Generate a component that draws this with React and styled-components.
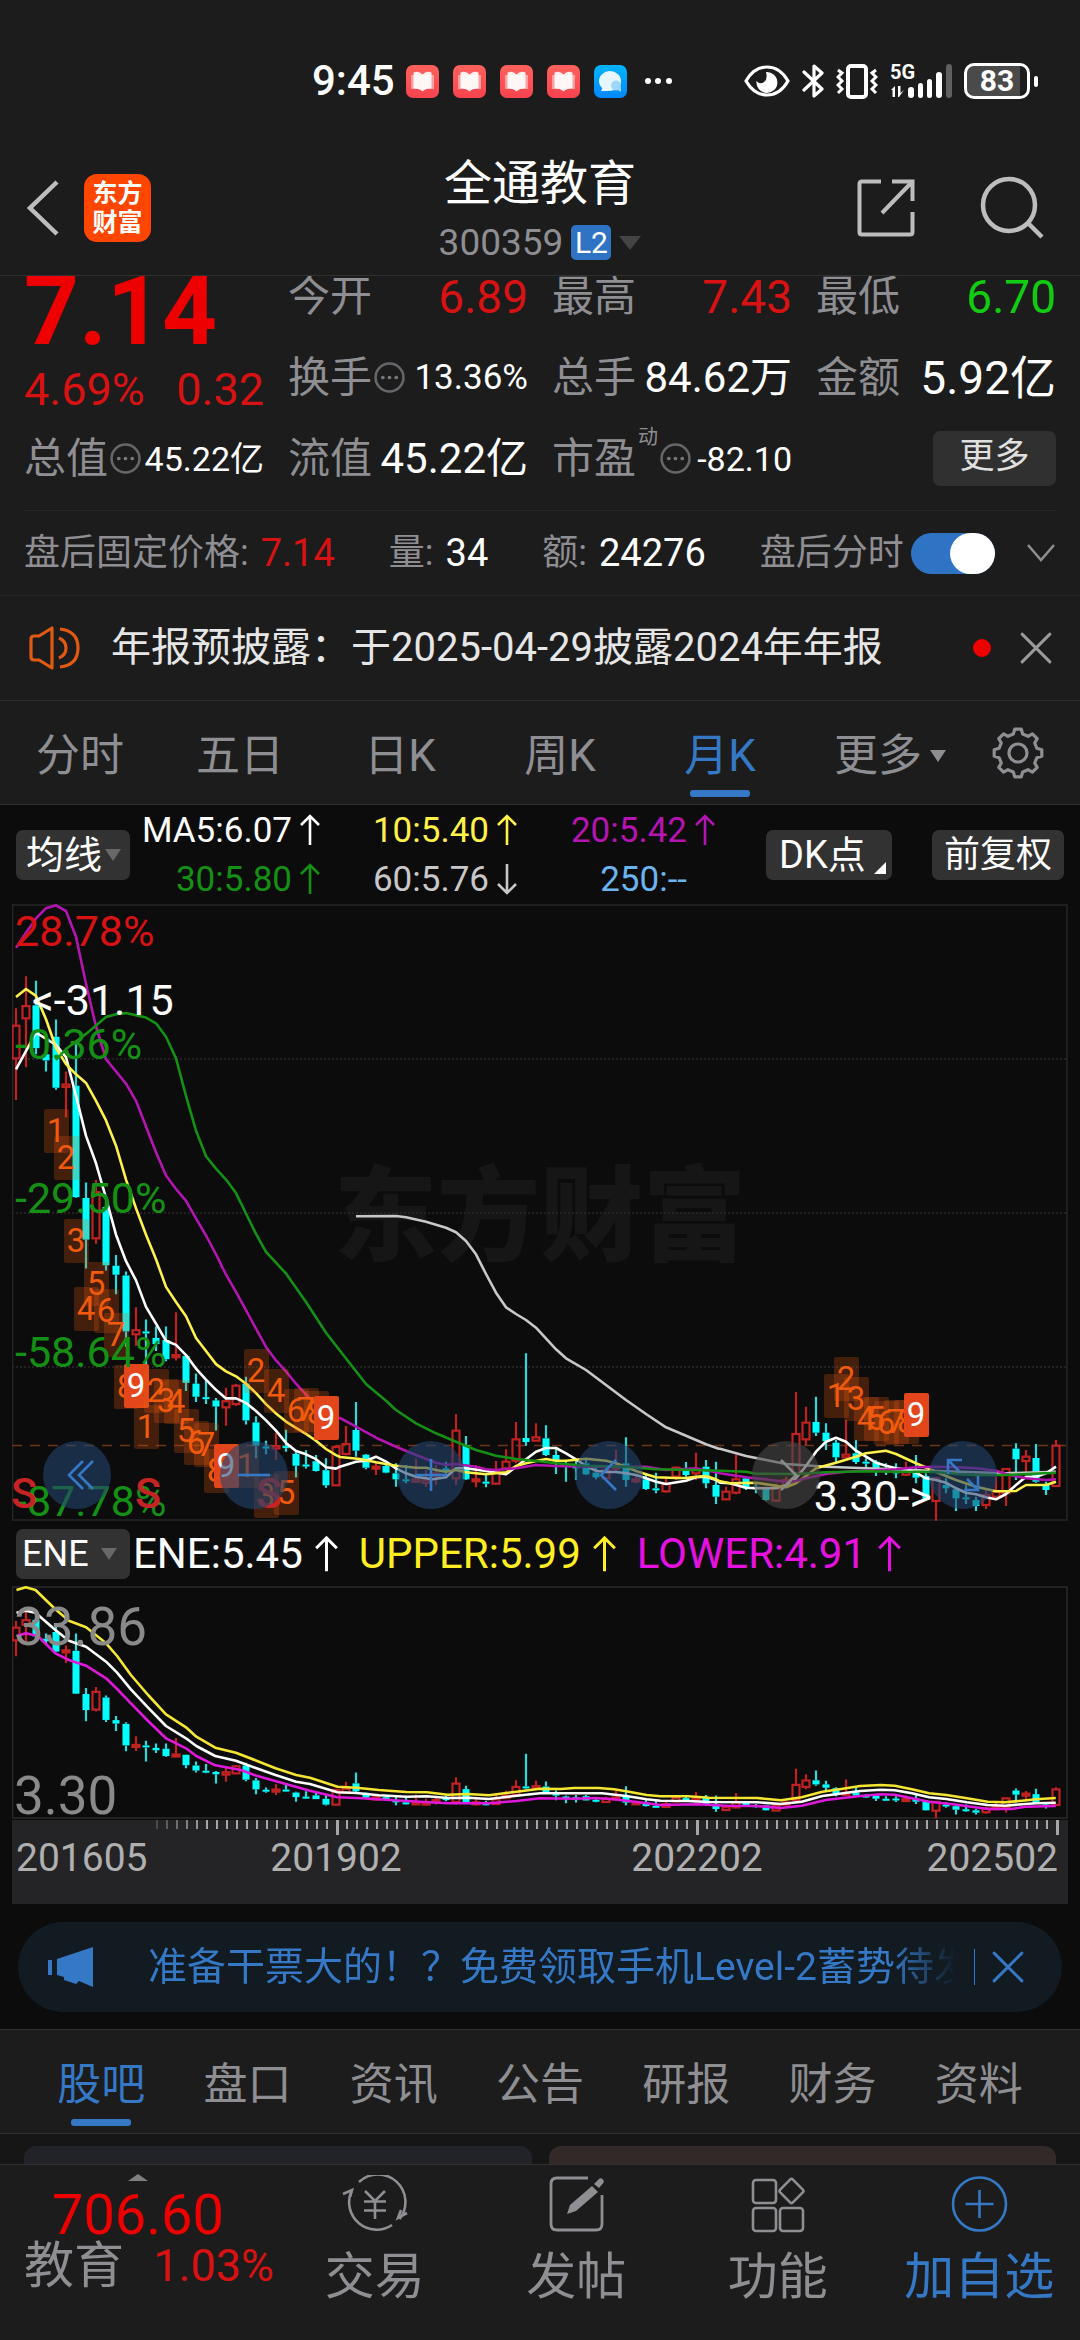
import React from "react";
import styled, { createGlobalStyle } from "styled-components";

const c = {
  page: "#1c1c1c",
  dark: "#0c0c0c",
  line: "#303030",
  faint: "#272727",
  grey: "#8e8e93",
  icon: "#bdbdbd",
  blue: "#3478c6",
  red: "#d81212",
  hotRed: "#ee0000",
  green: "#12cc12",
  maGreen: "#149014",
  yellow: "#fff04a",
  magenta: "#b414b0",
  button: "#323232",
  cyan: "#00ffff",
  candleRed: "#c02222",
  orange: "#f25a0c",
};

const font = '"Roboto", "Noto Sans CJK SC", sans-serif';

const GlobalStyle = createGlobalStyle`
  * { box-sizing: border-box; }
  body { margin: 0; background: ${c.page}; font-family: ${font}; color: #fff; }
  button { border: 0; padding: 0; margin: 0; background: none; color: inherit; font-family: inherit; cursor: pointer; }
  svg { display: block; flex: none; }
`;

/* ---------- status bar ---------- */

const StatusBar = styled.header`
  display: flex;
  align-items: center;
  justify-content: space-between;
  height: 140px;
  padding: 22px 42px 0 312px;
`;
const StatusGroup = styled.div`
  display: flex;
  align-items: center;
  gap: ${(p) => p.$gap}px;
`;
const Clock = styled.time`
  width: 80px;
  font-size: 42px;
  font-weight: 500;
  line-height: 48px;
`;
const AppBadge = styled.span`
  display: grid;
  place-items: center;
  width: 33px;
  height: 33px;
  border-radius: 7px;
  background: ${(p) => (p.$chat ? "linear-gradient(#00b4ff, #0088ff)" : "linear-gradient(#ff625c, #f8434f)")};
`;
const Battery = styled.span`
  display: grid;
  place-items: center;
  width: 66px;
  height: 36px;
  border: 3px solid #fff;
  border-radius: 10px;
  background: linear-gradient(90deg, #4a4a4a 88%, #1c1c1c 88%);
  font-size: 30px;
  font-weight: 700;
  line-height: 30px;
`;
const BatteryTip = styled.span`
  width: 4px;
  height: 11px;
  margin-left: 4px;
  border-radius: 2px;
  background: #fff;
`;
const BatteryWrap = styled.span`
  display: flex;
  align-items: center;
`;

const BookGlyph = () => (
  <svg width="25" height="23" viewBox="0 0 25 23">
    <path d="M1 5h23v14H1z" fill="#fff" opacity=".45" />
    <path d="M3.500 2.500Q9 .5 12.500 4.500Q16 .5 21.500 2.500V18.500Q16 18 12.500 21.500Q9 18 3.500 18.500Z" fill="#fff" opacity=".9" />
  </svg>
);
const ChatGlyph = () => (
  <svg width="25" height="23" viewBox="0 0 25 23">
    <ellipse cx="12" cy="11" rx="11" ry="10" fill="#e8f6ff" />
    <path d="M3 21h8l-5-6z" fill="#e8f6ff" />
    <circle cx="18" cy="15.500" r="5" fill="#9fd6ff" />
    <path d="M18 19l5 3v-5z" fill="#9fd6ff" />
  </svg>
);

/* ---------- title bar ---------- */

const TitleBar = styled.div`
  display: grid;
  grid-template-columns: 1fr auto 1fr;
  align-items: center;
  height: 136px;
  padding: 0 26px;
  border-bottom: 1px solid ${c.line};
`;
const Side = styled.div`
  display: flex;
  align-items: center;
  gap: ${(p) => p.$gap}px;
  padding-right: ${(p) => (p.$end ? 10 : 0)}px;
  justify-content: ${(p) => (p.$end ? "flex-end" : "flex-start")};
`;
const IconButton = styled.button`
  display: grid;
  place-items: center;
`;
const Logo = styled.span`
  display: grid;
  place-items: center;
  align-content: center;
  width: 67px;
  height: 68px;
  border-radius: 13px;
  background: #ff4600;
  font-size: 25px;
  font-weight: 700;
  line-height: 29px;
  text-align: center;
`;
const TitleBlock = styled.div`
  padding-top: 10px;
  text-align: center;
`;
const Title = styled.h1`
  margin: 0;
  font-size: 48px;
  font-weight: 400;
  line-height: 60px;
`;
const CodeRow = styled.div`
  display: flex;
  align-items: center;
  justify-content: center;
  gap: 8px;
  color: ${c.grey};
  font-size: 37px;
  line-height: 58px;
`;
const Level = styled.span`
  width: 40px;
  border-radius: 5px;
  background: #2f74c4;
  color: #fff;
  font-size: 30px;
  line-height: 35px;
  text-align: center;
`;
const Caret = styled.span`
  border: ${(p) => p.$w}px solid transparent;
  border-bottom-width: 0;
  border-top: ${(p) => p.$h}px solid ${(p) => p.$color};
`;

/* ---------- quote ---------- */

const QuoteClip = styled.section`
  overflow: hidden;
  padding: 0 24px;
`;
const QuoteGrid = styled.div`
  display: grid;
  grid-template-columns: repeat(4, 1fr);
  grid-auto-rows: 81px;
  column-gap: 24px;
  margin-top: -20px;
  padding-bottom: 11px;
  border-bottom: 1px solid ${c.faint};
`;
const PriceCell = styled.div`
  grid-row: span 2;
  color: ${c.hotRed};
`;
const Price = styled.div`
  font-size: 96px;
  font-weight: 700;
  line-height: 110px;
`;
const Change = styled.div`
  display: flex;
  justify-content: space-between;
  color: ${c.red};
  font-size: 45px;
  line-height: 48px;
`;
const Cell = styled.div`
  display: flex;
  align-items: center;
  justify-content: space-between;
  white-space: nowrap;
`;
const CellLabel = styled.span`
  display: flex;
  align-items: center;
  gap: 2px;
  color: ${c.grey};
  font-size: 42px;
  line-height: 48px;
`;
const Sup = styled.sup`
  align-self: flex-start;
  font-size: 20px;
  line-height: 20px;
  margin-top: -8px;
`;
const CellValue = styled.span`
  color: ${(p) => p.$color || "#fff"};
  font-size: ${(p) => p.$size || 42}px;
  line-height: 56px;
`;
const MoreButton = styled.button`
  width: 123px;
  height: 55px;
  margin-left: auto;
  padding-bottom: 4px;
  border-radius: 7px;
  background: #303030;
  color: #e0e0e0;
  font-size: 35px;
  line-height: 50px;
`;
const Dots = () => (
  <svg width="31" height="31" viewBox="0 0 30 30" fill="#77777b">
    <circle cx="15" cy="15" r="13.500" fill="none" stroke="#66666a" strokeWidth="2.500" />
    <circle cx="8.500" cy="15" r="1.800" /><circle cx="15" cy="15" r="1.800" /><circle cx="21.500" cy="15" r="1.800" />
  </svg>
);

const AfterRow = styled.section`
  display: flex;
  align-items: center;
  gap: 54px;
  height: 85px;
  padding: 0 27px 0 24px;
  border-bottom: 1px solid ${c.faint};
  font-size: 36px;
  line-height: 48px;
  white-space: nowrap;
`;
const Pair = styled.span`
  display: flex;
  align-items: center;
  gap: 12px;
  color: ${c.grey};
`;
const PairValue = styled.span`
  color: ${(p) => p.$color || "#fff"};
  font-size: 38px;
`;
const SwitchGroup = styled.div`
  display: flex;
  align-items: center;
  gap: 31px;
  margin-left: auto;
`;
const SwitchLabel = styled.label`
  display: flex;
  align-items: center;
  gap: 7px;
  color: ${c.grey};
`;
const Switch = styled.input`
  appearance: none;
  display: flex;
  justify-content: flex-end;
  width: 84px;
  height: 41px;
  margin: 0;
  border-radius: 21px;
  background: #2f74c4;
  &::after {
    content: "";
    width: 45px;
    height: 41px;
    border-radius: 21px;
    background: #fff;
  }
`;

const Notice = styled.section`
  display: flex;
  align-items: center;
  height: 105px;
  padding: 0 28px;
  border-bottom: 1px solid ${c.line};
`;
const NoticeText = styled.span`
  flex: 1;
  margin-left: 30px;
  color: #e6e6e6;
  font-size: 40px;
  line-height: 56px;
  white-space: nowrap;
`;
const RedDot = styled.span`
  width: 18px;
  height: 18px;
  margin-right: 29px;
  border-radius: 50%;
  background: ${c.hotRed};
`;

/* ---------- tabs ---------- */

const PeriodTabs = styled.nav`
  display: grid;
  grid-template-columns: repeat(5, 8fr) 9fr 5fr;
  height: 104px;
  border-bottom: 1px solid ${c.line};
`;
const SettingsButton = styled(IconButton)`
  justify-content: start;
  padding-left: 12px;
`;
const InfoTabs = styled.nav`
  display: grid;
  grid-template-columns: repeat(7, 1fr);
  height: 105px;
  padding: 0 28px;
  border: solid ${c.line};
  border-width: 1px 0;
`;
const Tab = styled.button`
  display: flex;
  flex-direction: column;
  align-items: center;
  justify-content: flex-end;
  gap: 4px;
  padding-bottom: 7px;
  color: ${(p) => (p.$on ? c.blue : c.grey)};
  font-size: 44px;
  line-height: 60px;
  &::after {
    content: "";
    width: 60px;
    height: 7px;
    border-radius: 3px;
    background: ${(p) => (p.$on ? c.blue : "transparent")};
  }
`;
const TabText = styled.span`
  display: flex;
  align-items: center;
  gap: 8px;
`;

/* ---------- charts ---------- */

const ChartArea = styled.section`
  background: ${c.dark};
`;
const MaBar = styled.div`
  display: flex;
  align-items: center;
  height: 99px;
  padding: 0 16px;
`;
const Chip = styled.button`
  position: relative;
  display: flex;
  align-items: center;
  justify-content: ${(p) => (p.$start ? "flex-start" : "center")};
  gap: ${(p) => p.$gap || 3}px;
  width: ${(p) => p.$w}px;
  height: 50px;
  padding: 0 0 0 ${(p) => p.$start || 0}px;
  border-radius: 7px;
  background: ${c.button};
  font-size: ${(p) => p.$size || 36}px;
  line-height: 48px;
  white-space: nowrap;
`;
const Corner = styled.span`
  position: absolute;
  right: 6px;
  bottom: 6px;
  border: 6px solid #fff;
  border-top-color: transparent;
  border-left-color: transparent;
`;
const MaGrid = styled.div`
  display: grid;
  grid-template-columns: 190px 197px 198px;
  grid-auto-rows: 49px;
  margin-right: auto;
`;
const MaItem = styled.span`
  display: flex;
  align-items: center;
  justify-content: flex-end;
  gap: 8px;
  color: ${(p) => p.$color};
  font-size: 35px;
  white-space: nowrap;
`;
const ArrowSlot = styled.span`
  width: 20px;
`;
const ChipPair = styled.div`
  display: flex;
  gap: 40px;
`;
const Frame = styled.div`
  position: relative;
  margin: 0 12px;
`;
const Plot = styled.svg`
  width: 100%;
  height: auto;
  font-family: ${font};
`;
const ToolRow = styled.div`
  position: absolute;
  left: 31px;
  right: 71px;
  bottom: 12px;
  display: flex;
  justify-content: space-between;
`;
const RoundTool = styled.button`
  display: grid;
  place-items: center;
  width: 68px;
  height: 68px;
  border-radius: 50%;
  background: ${(p) => (p.$dim ? "rgba(72, 72, 72, 0.6)" : "rgba(36, 68, 112, 0.6)")};
`;
const EneBar = styled.div`
  display: flex;
  align-items: center;
  height: 65px;
  padding: 0 16px;
`;
const EneItem = styled.span`
  display: flex;
  align-items: center;
  gap: 12px;
  margin-left: ${(p) => (p.$first ? 3 : 21)}px;
  color: ${(p) => p.$color};
  font-size: 42px;
  white-space: nowrap;
`;

const TICK = 10;
const candleX = (i) => 16 + i * TICK;

// Every row is [high, low, bodyTop, bodyBottom, rising]; rows are stored in
// blocks, each with its own vertical origin and resolution.
const block = (origin, unit, rows) =>
  rows.map(([h, l, t, b, up]) => [h, l, t, b].map((v) => origin + v / unit).concat(up));

const candles = [
  ...block(900, 2.45, [
    [265, 490, 308, 388, 1], [187, 410, 260, 290, 1], [198, 378, 258, 363, 0], [345, 420, 378, 393, 0],
    [293, 465, 335, 460, 0], [420, 533, 452, 458, 1], [345, 730, 455, 728, 0], [692, 903, 730, 832, 0],
    [686, 842, 716, 829, 1], [740, 908, 752, 895, 0], [870, 966, 896, 918, 0], [910, 1095, 920, 1057, 0],
    [998, 1092, 1054, 1064, 1], [1028, 1160, 1057, 1062, 0], [1045, 1105, 1073, 1088, 0], [1045, 1130, 1078, 1125, 0],
    [1010, 1128, 1115, 1120, 1], [1115, 1203, 1117, 1183, 0], [1160, 1230, 1185, 1217, 0], [1175, 1235, 1218, 1223, 0],
    [1220, 1300, 1226, 1241, 0], [1195, 1288, 1228, 1243, 1], [1185, 1240, 1190, 1235, 1], [1168, 1285, 1185, 1275, 0],
    [1265, 1368, 1280, 1337, 0], [1325, 1358, 1339, 1344, 0], [1305, 1372, 1338, 1344, 1], [1298, 1352, 1338, 1343, 0],
    [1352, 1415, 1357, 1386, 0], [1348, 1393, 1383, 1388, 0], [1360, 1400, 1375, 1399, 0], [1368, 1440, 1397, 1434, 0],
    [1335, 1435, 1340, 1434, 1],
  ]),
  ...block(1140, 3, [
    [858, 946, 912, 942, 1], [786, 950, 870, 932, 0], [942, 988, 944, 983, 0], [965, 1005, 980, 985, 1],
    [975, 1000, 978, 998, 0], [970, 1040, 1000, 1018, 0], [975, 1030, 1018, 1022, 0], [956, 1028, 1018, 1025, 1],
    [990, 1040, 1020, 1028, 1], [975, 1035, 1000, 1008, 1], [965, 1010, 985, 995, 0], [822, 1035, 872, 1015, 1],
    [888, 1020, 915, 1018, 0], [975, 1042, 1018, 1023, 1], [1005, 1042, 1025, 1030, 0], [963, 1033, 995, 1031, 1],
    [928, 990, 965, 985, 1], [846, 970, 898, 962, 1], [640, 917, 894, 906, 0], [850, 903, 892, 902, 1],
    [856, 948, 895, 945, 0], [925, 1002, 945, 965, 0], [965, 1025, 972, 975, 0], [960, 1020, 978, 985, 0],
    [960, 1005, 970, 1003, 0], [980, 1018, 998, 1012, 0], [975, 1018, 990, 1015, 1], [930, 1000, 980, 985, 1],
    [892, 1040, 970, 1020, 0], [1005, 1030, 1018, 1024, 1], [1000, 1050, 1018, 1047, 0], [998, 1060, 1045, 1050, 0],
    [1010, 1058, 1032, 1054, 1], [980, 1020, 983, 1010, 1], [966, 1010, 985, 1005, 0], [938, 1020, 990, 1000, 1],
    [960, 1045, 980, 1030, 0], [965, 1092, 1035, 1070, 0],
  ]),
  ...block(1300, 3, [
    [560, 600, 575, 598, 1], [465, 583, 538, 578, 1], [528, 570, 535, 565, 0], [550, 580, 560, 564, 0],
    [560, 602, 562, 600, 0], [550, 606, 562, 602, 1], [530, 560, 540, 556, 1], [276, 535, 402, 520, 1],
    [320, 435, 368, 418, 1], [290, 408, 366, 398, 0], [370, 450, 398, 424, 0], [420, 490, 428, 472, 0],
    [360, 475, 464, 472, 1], [420, 492, 460, 486, 0], [475, 505, 485, 489, 0], [480, 528, 485, 510, 0],
    [490, 525, 510, 514, 0], [490, 535, 508, 520, 0], [485, 528, 512, 524, 1], [465, 550, 510, 533, 0],
    [520, 602, 528, 600, 0], [530, 662, 535, 603, 1], [535, 580, 555, 565, 0], [560, 633, 568, 595, 0],
    [555, 612, 592, 597, 0], [590, 633, 600, 618, 0], [570, 627, 585, 615, 1], [530, 600, 575, 590, 1],
    [505, 618, 507, 580, 1], [430, 540, 446, 478, 0], [450, 515, 470, 483, 1], [432, 548, 474, 545, 0],
    [545, 585, 555, 570, 0], [420, 560, 437, 558, 1],
  ]),
];

// Line points in flat x, y order, stored in blocks like the candles.
const trace = (...blocks) =>
  blocks
    .flatMap(([ox, ux, oy, uy, flat]) => {
      const out = [];
      for (let i = 0; i < flat.length; i += 2) {
        out.push(`${(ox + flat[i] / ux).toFixed(1)},${(oy + flat[i + 1] / uy).toFixed(1)}`);
      }
      return out;
    })
    .join(" ");
const early = (...flat) => [0, 3, 900, 2.45, flat];
const mid = (...flat) => [340, 3, 1140, 3, flat];
const late = (...flat) => [720, 3, 1300, 3, flat];
const eneLeft = (...flat) => [0, 2.904, 1520, 3, flat];
const eneRight = (...flat) => [540, 2.904, 1520, 3, flat];

const maLines = [
  { color: "#c8c8c8", points: trace(
    mid(48,229,168,228,198,232,258,245,318,263,348,277,378,303,408,343,438,402,468,458,498,502,528,522,558,540,588,563,648,628,678,655,738,690,798,735,858,780,918,822,978,862,1038,887,1098,913,1136,926),
    late(0,446,78,468,138,480,198,492,318,500,438,505,528,508,648,513,768,517,858,520,1008,515)) },
  { color: "#fff", points: trace(
    early(48,415,108,325,168,355,198,385,228,480,258,578,288,645,318,730,348,820,378,885,408,932,438,997,468,1038,498,1080,528,1090,558,1115,588,1148,618,1175,648,1200,678,1221,708,1221,738,1232,768,1252,798,1275,828,1300,858,1330,888,1350,918,1358,948,1370,978,1390,1008,1393),
    mid(0,980,48,965,78,962,108,950,138,965,168,985,198,1000,228,1010,278,1018,318,1012,348,985,378,985,438,993,498,1003,528,980,588,935,618,924,648,924,678,940,708,958,738,978,768,992,798,996,828,996,858,1000,888,1005,918,1015,948,1025,978,1032,1038,1022,1068,1012,1098,1010,1128,1020),
    late(0,548,30,550,78,563,108,565,168,565,198,555,228,535,258,498,288,455,318,425,348,413,378,425,408,452,438,470,468,488,498,497,528,505,558,508,588,518,618,535,648,540,678,548,708,565,738,578,768,583,798,592,828,598,858,582,888,555,918,530,948,530,978,520,1008,500)) },
  { color: c.yellow, points: trace(
    early(48,238,78,218,108,235,138,292,168,362,198,402,228,427,258,448,288,492,318,540,348,602,378,685,408,755,438,820,468,880,498,948,528,985,558,1020,588,1073,618,1105,648,1137,678,1155,708,1167,738,1185,768,1208,798,1235,828,1258,858,1278,888,1293,918,1308,948,1325,978,1345,1008,1360),
    mid(0,951,60,957,108,967,168,977,228,983,258,983,288,990,318,995,348,990,378,997,438,1003,498,997,528,978,558,970,588,963,618,957,648,962,678,962,738,956,798,962,828,970,858,980,888,993,918,1003,948,1012,1008,1014,1038,1014,1068,1010,1098,1008,1128,1018),
    late(0,544,30,550,108,548,198,562,228,550,258,528,288,505,348,488,408,470,438,460,498,452,528,462,588,490,648,515,678,528,708,540,768,560,828,574,888,573,918,555,978,555,1008,545)) },
  { color: c.magenta, points: trace(
    early(48,117,78,80,108,45,138,20,168,13,198,27,228,90,258,205,288,310,318,390,348,420,378,450,408,492,438,555,468,618,498,675,528,708,558,737,588,780,618,822,648,868,678,918,708,960,738,1005,768,1050,798,1095,828,1128,858,1155,888,1185,918,1212,948,1235,1008,1268),
    mid(0,834,48,860,108,893,168,920,228,945,288,968,318,974,348,972,408,980,438,988,468,990,528,985,588,975,648,978,738,980,858,980,918,980,978,990,1068,985,1128,997),
    late(0,520,78,532,198,545,228,543,258,535,318,522,378,515,438,512,528,508,588,502,648,500,708,502,768,505,828,512,858,522,918,535,978,540,1008,538)) },
  { color: c.maGreen, points: trace(
    early(168,392,198,365,258,328,318,287,348,280,378,277,438,288,468,302,498,335,528,388,558,480,588,565,618,628,648,658,678,685,708,718,738,768,768,818,798,862,858,915,918,985,978,1060),
    mid(0,632,78,732,138,782,168,810,228,850,288,880,348,905,408,930,468,947,528,957,588,963,648,970,738,977,858,980,948,988,1068,990),
    late(0,512,78,515,108,521,228,522,318,517,438,514,528,515,648,516,708,522,768,525,858,525,1008,518)) },
];

const eneLines = [
  { color: "#f5e632", points: trace(
    eneLeft(48,210,75,202,103,210,161,268,200,302,250,322,308,370,340,408,380,465,430,525,482,583,540,622,570,650,625,683,685,698,745,722,800,745,860,765,900,773,980,800,1035,803,1100,810,1180,816,1240,817,1300,824,1360,822,1420,826,1500,815),
    eneRight(0,806,60,807,100,804,170,804,215,808,250,814,310,825,350,829,430,829,490,833,630,834,700,841,760,832,820,815,870,808,930,798,990,795,1030,797,1080,808,1130,820,1180,825,1240,835,1300,845,1350,847,1400,842,1440,838,1498,834)) },
  { color: "#fff", points: trace(
    eneLeft(48,278,75,272,103,278,161,330,200,362,250,380,308,425,340,458,380,508,430,563,482,618,540,655,570,678,625,708,685,722,745,745,800,765,860,785,900,792,980,817,1035,819,1100,826,1180,830,1240,829,1300,834,1360,833,1420,837,1500,827),
    eneRight(0,820,110,820,180,820,250,828,310,838,350,842,430,843,490,846,630,847,700,852,760,845,820,828,870,821,930,813,990,809,1030,811,1080,820,1130,832,1180,837,1240,847,1300,855,1350,857,1400,853,1440,850,1498,848)) },
  { color: "#e018dc", points: trace(
    eneLeft(48,348,75,340,110,348,161,400,200,420,250,437,308,475,340,507,380,550,430,603,482,655,540,685,570,708,625,736,700,750,745,767,830,792,900,812,980,832,1050,835,1180,843,1300,850,1420,850,1500,843),
    eneRight(0,835,100,836,160,834,215,838,310,850,350,855,460,853,540,857,630,858,700,864,760,857,830,840,930,828,990,823,1030,824,1080,835,1130,845,1200,853,1300,867,1370,867,1410,860,1498,858)) },
];

// Counts of the nine-turn signal: [first candle index, y of each count].
const turnRuns = [
  [4, [1131, 1158, 1241, 1309, 1284, 1311, 1335, 1387, 1386]],
  [13, [1427, 1391, 1401, 1402, 1431, 1443, 1445, 1471, 1466]],
  [23, [1466, 1371, 1496, 1391, 1493, 1411, 1410, 1413, 1418]],
  [82, [1396, 1379, 1399, 1419, 1419, 1423, 1422, 1422, 1415]],
];

const Candles = ({ map = (y) => y }) =>
  candles.map(([h, l, t, b, up], i) => {
    const x = candleX(i);
    const [high, low, top, bottom] = [h, l, t, b].map(map);
    const height = Math.max(bottom - top, 2);
    const color = up ? c.candleRed : c.cyan;
    return (
      <g key={i} stroke={color} strokeWidth="2.200" fill={up ? "none" : color}>
        <path d={`M${x} ${high}V${top}M${x} ${top + height}V${low}`} stroke={up ? color : "#2fd8d8"} />
        {up ? (
          <rect x={x - 3.5} y={top} width="7" height={height} />
        ) : (
          <rect x={x - 3.5} y={top} width="7" height={height} stroke="none" />
        )}
      </g>
    );
  });

const Lines = ({ data }) =>
  data.map((l) => (
    <polyline key={l.color} points={l.points} fill="none" stroke={l.color} strokeWidth="2.600" strokeLinejoin="round" />
  ));

const TurnCount = ({ x, y, n }) => {
  const final = n === 9;
  return (
    <g>
      <rect x={x - 12} y={y - 22} width="25" height="44" rx="2" fill={final ? "#e2461a" : c.orange} opacity={final ? 1 : 0.24} />
      <text x={x} y={y + 11} fontSize="33" textAnchor="middle" fill={final ? "#fff" : c.orange}>{n}</text>
    </g>
  );
};

const percentLabels = [
  ["28.78%", 946, c.red],
  ["-0.36%", 1059, c.maGreen],
  ["-29.50%", 1213, c.maGreen],
  ["-58.64%", 1367, c.maGreen],
  ["-87.78%", 1516, c.maGreen],
];

const PriceChart = () => (
  <Plot viewBox="12 904 1056 617" role="img" aria-label="月K">
    <text x="540" y="1253" fontSize="103" fontWeight="900" textAnchor="middle" fill="#161616">东方财富</text>
    <g stroke="#2a2a2a" strokeWidth="1.500" strokeDasharray="2 2">
      <path d="M12 1059H1067M12 1213H1067M12 1367H1067" />
    </g>
    <rect x="12.500" y="905" width="1054.500" height="615" fill="none" stroke="#262626" strokeWidth="1.500" />
    <path d="M12 1445.500H1067" stroke="#6e3418" strokeWidth="1.500" strokeDasharray="10 8" />
    <Candles />
    <Lines data={maLines} />
    {turnRuns.map(([start, ys]) =>
      ys.map((y, k) => <TurnCount key={`${start}-${k}`} x={candleX(start + k)} y={y} n={k + 1} />)
    )}
    <g fontSize="43">
      {percentLabels.map(([t, y, fill]) => (
        <text key={t} x="15" y={y} fill={fill}>{t}</text>
      ))}
      <g fill="#c62424" fontWeight="500" textAnchor="middle">
        <text x="24" y="1508">S</text>
        <text x="148" y="1508">S</text>
        <text x="269" y="1508">S</text>
      </g>
      <text x="32" y="1015" fill="#fff">&lt;-31.15</text>
      <text x="932" y="1511" fill="#fff" textAnchor="end">3.30-&gt;</text>
    </g>
  </Plot>
);

const EneChart = () => (
  <Plot viewBox="12 1586 1056 234" role="img" aria-label="ENE">
    <rect x="12.500" y="1587" width="1054.500" height="231" fill="none" stroke="#2a2a2a" strokeWidth="1.500" />
    <Candles map={(y) => 1818 - (1520 - y) * 0.385} />
    <Lines data={eneLines} />
    <g fontSize="53" fill="#8a8a8a">
      <text x="14" y="1645">33.86</text>
      <text x="14" y="1814">3.30</text>
    </g>
  </Plot>
);

const dates = [[16, "201605", "start"], [336, "201902", "middle"], [697, "202202", "middle"], [1058, "202502", "end"]];

const TimeAxis = () => (
  <Plot viewBox="12 0 1056 84" role="img" aria-label="201605 - 202502">
    <rect x="12" width="1056" height="84" fill="#242426" />
    {candles.map((_, i) => {
      const x = candleX(i);
      if (i < 14) return null;
      const major = i === 32 || i === 68 || i === 104;
      return <rect key={i} x={x} width={major ? 3 : 2} height={major ? 15 : 9} fill="#a6a6a6" opacity={Math.min(1, (i - 12) / 7)} />;
    })}
    {dates.map(([x, t, anchor]) => (
      <text key={t} x={x} y="51" fontSize="39" fill="#b0b0b0" textAnchor={anchor}>{t}</text>
    ))}
  </Plot>
);

const Arrow = ({ down, large }) => {
  const h = large ? 38 : 32;
  const w = large ? 23 : 20;
  return (
    <svg width={w} height={h} viewBox="0 0 20 32" fill="none" stroke="currentColor" strokeWidth="2.600" role="img" aria-label={down ? "↓" : "↑"}>
      <path d={down ? "M10 1V30M1 21L10 30L19 21" : "M10 31V2M1 11L10 2L19 11"} />
    </svg>
  );
};

const CloseGlyph = ({ color, size = 30 }) => (
  <svg width={size} height={size} viewBox="0 0 30 30" stroke={color} strokeWidth="2.800" strokeLinecap="round">
    <path d="M2 2L28 28M28 2L2 28" />
  </svg>
);

/* ---------- banner, cards, bottom bar ---------- */

const BannerWrap = styled.div`
  padding: 18px 18px 17px;
`;
const Banner = styled.div`
  display: flex;
  align-items: center;
  height: 90px;
  padding: 0 38px 0 30px;
  border-radius: 45px;
  background: #121a22;
  color: ${c.blue};
`;
const BannerText = styled.a`
  flex: 1;
  overflow: hidden;
  margin: 0 18px 0 55px;
  color: inherit;
  font-size: 39px;
  line-height: 56px;
  text-decoration: none;
  white-space: nowrap;
  mask-image: linear-gradient(90deg, #000 92%, transparent);
`;
const Divider = styled.span`
  width: 1px;
  height: 36px;
  margin-right: 17px;
  background: ${c.blue};
`;
const Cards = styled.div`
  display: grid;
  grid-template-columns: 1fr 1fr;
  gap: 17px;
  padding: 12px 24px 0;
  background: #161616;
`;
const Card = styled.div`
  height: 18px;
  border-radius: 12px 12px 0 0;
  background: ${(p) => p.$tone};
`;
const BottomBar = styled.nav`
  display: grid;
  grid-template-columns: 274px repeat(4, 1fr);
  height: 176px;
  border-top: 1px solid ${c.line};
`;
const IndexCell = styled.button`
  display: flex;
  flex-direction: column;
  align-items: center;
  padding: 9px 0 0 24px;
  color: ${c.hotRed};
`;
const UpMark = styled.span`
  border: 10px solid transparent;
  border-top-width: 0;
  border-bottom: 7px solid #808080;
  margin-right: 22px;
`;
const IndexValue = styled.span`
  margin-right: 22px;
  font-size: 56px;
  line-height: 68px;
`;
const IndexRow = styled.span`
  display: flex;
  align-items: center;
  justify-content: space-between;
  align-self: stretch;
  color: ${c.red};
  font-size: 45px;
  line-height: 34px;
`;
const IndexName = styled.span`
  color: ${c.grey};
  font-size: 50px;
`;
const NavItem = styled.button`
  display: flex;
  flex-direction: column;
  align-items: center;
  gap: 14px;
  padding-top: 10px;
  color: ${(p) => (p.$on ? c.blue : c.grey)};
  font-size: 50px;
  line-height: 60px;
  white-space: nowrap;
`;

const navIcons = {
  trade: (
    <svg width="66" height="58" viewBox="0 0 66 58" fill="none" stroke="currentColor" strokeWidth="2.600">
      <path d="M17 7A27.500 27.500 0 0 1 57.500 44M50 50A27.500 27.500 0 0 1 9.500 16" />
      <path d="M1 19L10 15L8 22M65 38L56 43L59 35" />
      <path d="M23 16L33 26L43 16M22 26.500H44M22 35.500H44M33 26V44" />
    </svg>
  ),
  post: (
    <svg width="57" height="58" viewBox="0 0 57 58" fill="none" stroke="currentColor" strokeWidth="2.800">
      <path d="M40 3H9Q3 3 3 9V49Q3 55 9 55H48Q54 55 54 49V20" />
      <path d="M44 11L50 17L28 36L19 39L22 30Z" fill="currentColor" stroke="none" />
      <path d="M46 9L50 5Q52 2 55 4.500Q57 7 54 9.500L51 13Z" fill="currentColor" stroke="none" />
    </svg>
  ),
  grid: (
    <svg width="54" height="58" viewBox="0 0 54 58" fill="none" stroke="currentColor" strokeWidth="2.600">
      <rect x="2" y="5" width="23" height="23" rx="3" />
      <rect x="2" y="33" width="23" height="23" rx="3" />
      <rect x="29" y="33" width="23" height="23" rx="3" />
      <rect x="31.500" y="7" width="18" height="18" rx="2" transform="rotate(45 40.500 16)" />
    </svg>
  ),
  add: (
    <svg width="57" height="58" viewBox="0 0 57 58" fill="none" stroke="currentColor" strokeWidth="2.600">
      <circle cx="28.500" cy="29" r="26.500" />
      <path d="M28.500 15V43M14.500 29H42.500" />
    </svg>
  ),
};

const toolIcons = [
  { name: "最左", icon: <path d="M24 4L10 18L24 32M34 4L20 18L34 32" /> },
  { name: "缩小", icon: <path d="M2 18H34" /> },
  { name: "放大", icon: <path d="M2 18H34M18 2V34" /> },
  { name: "左移", icon: <path d="M25 3L10 18L25 33" /> },
  { name: "右移", dim: true, icon: <path d="M13 3L28 18L13 33" /> },
  { name: "全屏", icon: <path d="M3 17V3H17M3 3L14 14M33 19V33H19M33 33L22 22" /> },
];

const gearPath = Array.from({ length: 8 }, (_, k) => {
  const at = (r, a) => {
    const t = ((k * 45 + a - 90) * Math.PI) / 180;
    return `${(26 + r * Math.cos(t)).toFixed(1)} ${(26 + r * Math.sin(t)).toFixed(1)}`;
  };
  return `${k ? "L" : "M"}${at(24, -8)}L${at(24, 8)}L${at(19.5, 14)}L${at(19.5, 31)}`;
}).join("") + "Z";

export default function App() {
  return (
    <>
      <GlobalStyle />
      <StatusBar>
        <StatusGroup $gap={14}>
          <Clock>9:45</Clock>
          {[0, 1, 2, 3].map((k) => <AppBadge key={k}><BookGlyph /></AppBadge>)}
          <AppBadge $chat><ChatGlyph /></AppBadge>
          <svg width="34" height="8" viewBox="0 0 34 8" fill="#fff">
            <circle cx="7" cy="4" r="3" /><circle cx="17" cy="4" r="3" /><circle cx="28" cy="4" r="3" />
          </svg>
        </StatusGroup>
        <StatusGroup $gap={12}>
          <svg width="46" height="32" viewBox="0 0 46 32" fill="none" stroke="#fff" strokeWidth="3.200">
            <path d="M2 16Q10 2 23 2T44 16Q36 30 23 30T2 16Z" />
            <path d="M22 7A10.500 10.500 0 1 1 12.500 16Q16 20 20 17T22 7Z" fill="#fff" stroke="none" />
          </svg>
          <svg width="22" height="34" viewBox="0 0 22 34" fill="none" stroke="#fff" strokeWidth="3.200" strokeLinejoin="round" strokeLinecap="round">
            <path d="M2 8L20 25L12 32V2L20 9L2 26" />
          </svg>
          <svg width="42" height="35" viewBox="0 0 42 35" fill="none" stroke="#fff" strokeWidth="3">
            <rect x="12" y="2" width="18" height="31" rx="3" strokeWidth="4" />
            <path d="M2 6L6 9L2 13L6 17L2 21L6 25L2 29M40 6L36 9L40 13L36 17L40 21L36 25L40 29" />
          </svg>
          <svg width="62" height="42" viewBox="0 -4 62 42" fill="#fff">
            <text x="0" y="15" fontSize="20" fontWeight="700" fontFamily="Roboto, sans-serif">5G</text>
            <path d="M1 26L5 22V33H2.500V26ZM8 22H10.500V29L14 26L9 33H8Z" />
            <rect x="18" y="23" width="6" height="11" rx="3" />
            <rect x="28" y="19" width="5" height="15" rx="2.500" />
            <rect x="37" y="15" width="5" height="19" rx="2.500" />
            <rect x="46" y="8" width="6" height="26" rx="3" />
            <rect x="56" y="0" width="6" height="34" rx="3" fill="#606060" />
          </svg>
          <BatteryWrap><Battery>83</Battery><BatteryTip /></BatteryWrap>
        </StatusGroup>
      </StatusBar>

      <TitleBar>
        <Side $gap={25}>
          <IconButton aria-label="返回">
            <svg width="33" height="56" viewBox="0 0 33 56" fill="none" stroke={c.icon} strokeWidth="4.500">
              <path d="M31 2L4 28L31 54" />
            </svg>
          </IconButton>
          <Logo><span>东方</span><span>财富</span></Logo>
        </Side>
        <TitleBlock>
          <Title>全通教育</Title>
          <CodeRow>
            <span>300359</span>
            <Level>L2</Level>
            <Caret $w={11} $h={14} $color="#444" />
          </CodeRow>
        </TitleBlock>
        <Side $gap={65} $end>
          <IconButton aria-label="分享">
            <svg width="58" height="58" viewBox="0 0 58 58" fill="none" stroke={c.icon} strokeWidth="4">
              <path d="M24 2.500H5Q2.500 2.500 2.500 5V53Q2.500 55.500 5 55.500H53Q55.500 55.500 55.500 53V33" />
              <path d="M35 2.500H55.500V22M55 3L25 34" />
            </svg>
          </IconButton>
          <IconButton aria-label="搜索">
            <svg width="64" height="64" viewBox="0 0 64 64" fill="none" stroke={c.icon} strokeWidth="4.500">
              <circle cx="29" cy="29" r="26" />
              <path d="M48 47L62 61" />
            </svg>
          </IconButton>
        </Side>
      </TitleBar>

      <QuoteClip>
        <QuoteGrid>
          <PriceCell>
            <Price>7.14</Price>
            <Change><span>4.69%</span><span>0.32</span></Change>
          </PriceCell>
          <Cell><CellLabel>今开</CellLabel><CellValue $color={c.red} $size={46}>6.89</CellValue></Cell>
          <Cell><CellLabel>最高</CellLabel><CellValue $color={c.red} $size={46}>7.43</CellValue></Cell>
          <Cell><CellLabel>最低</CellLabel><CellValue $color={c.green} $size={46}>6.70</CellValue></Cell>
          <Cell><CellLabel>换手<Dots /></CellLabel><CellValue $size={35}>13.36%</CellValue></Cell>
          <Cell><CellLabel>总手</CellLabel><CellValue>84.62万</CellValue></Cell>
          <Cell><CellLabel>金额</CellLabel><CellValue $size={46}>5.92亿</CellValue></Cell>
          <Cell><CellLabel>总值<Dots /></CellLabel><CellValue $size={34}>45.22亿</CellValue></Cell>
          <Cell><CellLabel>流值</CellLabel><CellValue>45.22亿</CellValue></Cell>
          <Cell><CellLabel>市盈<Sup>动</Sup><Dots /></CellLabel><CellValue $size={34}>-82.10</CellValue></Cell>
          <Cell><MoreButton>更多</MoreButton></Cell>
        </QuoteGrid>
      </QuoteClip>

      <AfterRow>
        <Pair>盘后固定价格: <PairValue $color={c.red}>7.14</PairValue></Pair>
        <Pair>量: <PairValue>34</PairValue></Pair>
        <Pair>额: <PairValue>24276</PairValue></Pair>
        <SwitchGroup>
          <SwitchLabel>盘后分时<Switch type="checkbox" role="switch" defaultChecked /></SwitchLabel>
          <IconButton aria-label="展开">
            <svg width="30" height="20" viewBox="0 0 30 20" fill="none" stroke={c.grey} strokeWidth="2.500">
              <path d="M2 2L15 17L28 2" />
            </svg>
          </IconButton>
        </SwitchGroup>
      </AfterRow>

      <Notice>
        <svg width="53" height="46" viewBox="0 0 53 46" fill="none" stroke="#e05a14" strokeWidth="3.200" strokeLinejoin="round">
          <path d="M24 3V43L11 35H6Q3 35 3 32V14Q3 11 6 11H11Z" />
          <path d="M31 13Q38 16 38 23T31 33M32 4Q50 6 50 23T32 42" />
        </svg>
        <NoticeText>年报预披露：于2025-04-29披露2024年年报</NoticeText>
        <RedDot />
        <IconButton aria-label="关闭"><CloseGlyph color="#9a9a9a" size={32} /></IconButton>
      </Notice>

      <PeriodTabs>
        {["分时", "五日", "日K", "周K", "月K"].map((t) => (
          <Tab key={t} $on={t === "月K"}><TabText>{t}</TabText></Tab>
        ))}
        <Tab><TabText>更多<Caret $w={8} $h={12} $color={c.grey} /></TabText></Tab>
        <SettingsButton aria-label="设置">
          <svg width="52" height="52" viewBox="0 0 52 52" fill="none" stroke={c.grey} strokeWidth="3.200" strokeLinejoin="round">
            <path d={gearPath} />
            <circle cx="26" cy="26" r="9" />
          </svg>
        </SettingsButton>
      </PeriodTabs>

      <ChartArea>
        <MaBar>
          <Chip $w={114} $start={10} $size={38}>均线<Caret $w={8} $h={12} $color="#686868" /></Chip>
          <MaGrid>
            <MaItem $color="#fff">MA5:6.07<Arrow /></MaItem>
            <MaItem $color={c.yellow}>10:5.40<Arrow /></MaItem>
            <MaItem $color={c.magenta}>20:5.42<Arrow /></MaItem>
            <MaItem $color={c.maGreen}>30:5.80<Arrow /></MaItem>
            <MaItem $color="#c8c8c8">60:5.76<Arrow down /></MaItem>
            <MaItem $color="#6ab4f0">250:--<ArrowSlot /></MaItem>
          </MaGrid>
          <ChipPair>
            <Chip $w={126} $start={13} $size={38}>DK点<Corner /></Chip>
            <Chip $w={132}>前复权</Chip>
          </ChipPair>
        </MaBar>
        <Frame>
          <PriceChart />
          <ToolRow>
            {toolIcons.map((t) => (
              <RoundTool key={t.name} $dim={t.dim} aria-label={t.name}>
                <svg width="36" height="36" viewBox="0 0 36 36" fill="none" stroke={t.dim ? "#8a8a8a" : c.blue} strokeWidth="2.600">{t.icon}</svg>
              </RoundTool>
            ))}
          </ToolRow>
        </Frame>
        <EneBar>
          <Chip $w={114} $gap={12} $start={6}>ENE<Caret $w={8} $h={12} $color="#686868" /></Chip>
          <EneItem $first $color="#fff">ENE:5.45<Arrow large /></EneItem>
          <EneItem $color="#ffee22">UPPER:5.99<Arrow large /></EneItem>
          <EneItem $color="#e610e0">LOWER:4.91<Arrow large /></EneItem>
        </EneBar>
        <Frame>
          <EneChart />
          <TimeAxis />
        </Frame>
        <BannerWrap>
          <Banner>
            <svg width="45" height="40" viewBox="0 0 45 40" fill={c.blue}>
              <path d="M0 13H4V28H0ZM9 12L45 0V40L31 34L28 37L16 33V30L9 28Z" />
            </svg>
            <BannerText href="#level2">准备干票大的！？免费领取手机Level-2蓄势待发</BannerText>
            <Divider />
            <IconButton aria-label="关闭"><CloseGlyph color={c.blue} size={32} /></IconButton>
          </Banner>
        </BannerWrap>
      </ChartArea>

      <InfoTabs>
        {["股吧", "盘口", "资讯", "公告", "研报", "财务", "资料"].map((t) => (
          <Tab key={t} $on={t === "股吧"}><TabText>{t}</TabText></Tab>
        ))}
      </InfoTabs>
      <Cards><Card $tone="#222328" /><Card $tone="#332928" /></Cards>

      <BottomBar>
        <IndexCell>
          <UpMark />
          <IndexValue>706.60</IndexValue>
          <IndexRow><IndexName>教育</IndexName><span>1.03%</span></IndexRow>
        </IndexCell>
        <NavItem>{navIcons.trade}交易</NavItem>
        <NavItem>{navIcons.post}发帖</NavItem>
        <NavItem>{navIcons.grid}功能</NavItem>
        <NavItem $on>{navIcons.add}加自选</NavItem>
      </BottomBar>
    </>
  );
}
